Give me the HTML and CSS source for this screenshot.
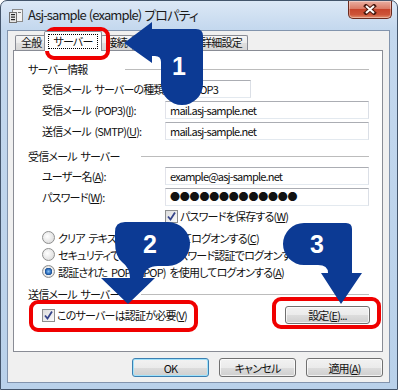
FILE: index.html
```html
<!DOCTYPE html>
<html lang="ja">
<head>
    <meta charset="UTF-8">
    <title>Asj-sample (example) プロパティ</title>
    <link rel="stylesheet" href="styles.css">
</head>
<body>
<div class="window">
    <div class="titlebar">
        <svg class="app-icon" width="15" height="14" viewBox="0 0 15 14">
            <rect x="3.5" y="0.5" width="10" height="12" fill="#f2f2f2" stroke="#8c8c8c"/>
            <rect x="0.5" y="3.5" width="7" height="10" fill="#e6e6e6" stroke="#707070"/>
            <rect x="2" y="5" width="4" height="1.2" fill="#222"/>
            <rect x="2" y="7.5" width="4" height="1.2" fill="#222"/>
            <rect x="2" y="10" width="4" height="1.2" fill="#222"/>
            <rect x="9" y="3" width="3" height="1" fill="#777"/>
        </svg>
        <span class="title">Asj-sample (example) プロパティ</span>
        <div class="close">
            <svg width="14" height="11" viewBox="0 0 14 11">
                <path d="M3 2 L11 9 M11 2 L3 9" stroke="#4b1a10" stroke-width="4" stroke-linecap="square"/>
                <path d="M3 2 L11 9 M11 2 L3 9" stroke="#fff" stroke-width="2"/>
            </svg>
        </div>
    </div>

    <div class="client">
        <div class="tabs">
            <div class="tab">全般</div>
            <div class="tab active"><span class="focus">サーバー</span></div>
            <div class="tab">接続</div>
            <div class="tab">セキュリティ</div>
            <div class="tab">詳細設定</div>
        </div>

        <div class="panel">
            <div class="group">
                <span class="group-label g1">サーバー情報</span><span class="rule"></span>
            </div>
            <div class="field">
                <span class="label wide">受信メール サーバーの種類(<u>M</u>):</span>
                <span class="box short">POP3</span>
            </div>
            <div class="field">
                <span class="label">受信メール (POP3)(<u>I</u>):</span>
                <span class="box">mail.asj-sample.net</span>
            </div>
            <div class="field">
                <span class="label">送信メール (SMTP)(<u>U</u>):</span>
                <span class="box">mail.asj-sample.net</span>
            </div>

            <div class="group second">
                <span class="group-label g2">受信メール サーバー</span><span class="rule"></span>
            </div>
            <div class="field">
                <span class="label">ユーザー名(<u>A</u>):</span>
                <span class="box">example@asj-sample.net</span>
            </div>
            <div class="field">
                <span class="label">パスワード(<u>W</u>):</span>
                <span class="box dots">●●●●●●●●●●●●●</span>
            </div>
            <div class="option save">
                <span class="check on"></span>パスワードを保存する(<u>W</u>)
            </div>
            <div class="option radio-row first">
                <span class="radio"></span>クリア テキスト認証を使用してログオンする(<u>C</u>)
            </div>
            <div class="option radio-row">
                <span class="radio"></span>セキュリティで保護されたパスワード認証でログオンする(<u>Q</u>)
            </div>
            <div class="option radio-row">
                <span class="radio on"></span>認証された POP (APOP) を使用してログオンする(<u>A</u>)
            </div>

            <div class="group third">
                <span class="group-label g2">送信メール サーバー</span><span class="rule"></span>
            </div>
            <div class="option last">
                <span class="check on"></span>このサーバーは認証が必要(<u>V</u>)
                <span class="btn settings">設定(<u>E</u>)...</span>
            </div>
        </div>

        <div class="buttons">
            <span class="btn default">OK</span>
            <span class="btn">キャンセル</span>
            <span class="btn">適用(<u>A</u>)</span>
        </div>
    </div>

    <!-- annotation overlay -->
    <svg class="marks" width="398" height="390" viewBox="0 0 398 390">
        <g fill="none" stroke="#f00000" stroke-width="4">
            <rect x="47" y="29" width="61" height="29" rx="7"/>
            <rect x="31" y="302" width="165" height="28" rx="7"/>
            <rect x="274" y="299" width="105" height="28" rx="7"/>
        </g>
        <g fill="#0c3a94">
            <path d="M124 43 L152 22 L152 29 L196 29 Q203 29 203 36 L203 84 A21 21 0 0 1 161 84 L161 62 Q161 56 155 56 L152 56 L152 63 Z"/>
            <path d="M125 222 L168 222 A22 22 0 0 1 168 266 L158 266 Q145 266 143 278 L155 278 L128 304 L101 278 L130 278 Q130 268 122 262 Q115 256 115 242 L115 232 Q115 222 125 222 Z"/>
            <path d="M346 223 Q352 223 352 229 L352 273 L362 273 L341 304 L321 273 L328 273 Q328 265 318 265 L304 265 A21 21 0 0 1 304 223 Z"/>
        </g>
        <g class="num" fill="#fff" text-anchor="middle">
            <text x="179" y="75">1</text>
            <text x="150" y="253">2</text>
            <text x="317" y="253">3</text>
        </g>
    </svg>
</div>
</body>
</html>
```

FILE: styles.css
```css
* { box-sizing: border-box; }
body {
    margin: 0;
    width: 398px;
    height: 390px;
    overflow: hidden;
    background: #fff;
    font-family: "Noto Sans CJK JP", "Noto Sans", sans-serif;
    font-size: 11px;
    letter-spacing: -0.8px;
    word-spacing: 2px;
    font-feature-settings: "palt";
    color: #111;
}
u { text-underline-offset: 1px; }

.window {
    position: relative;
    width: 398px;
    height: 390px;
    border: 1px solid #44556b;
    border-radius: 7px 7px 0 0;
    background: linear-gradient(#dce8f6, #c4d8ee 28px, #b9d1ea);
    padding: 0 7px 6px 6px;
    display: flex;
    flex-direction: column;
}

/* title bar */
.titlebar { height: 29px; display: flex; align-items: center; margin-right: -2px; }
.app-icon { margin: 0 4px 0 2px; }
.title { font-size: 13px; letter-spacing: -0.9px; word-spacing: 1px; color: #1b1b1b; margin-top: -2px; }
.close {
    margin-left: auto;
    align-self: flex-start;
    width: 44px;
    height: 18px;
    border: 1px solid #6b2a1e;
    border-top: none;
    border-radius: 0 0 5px 5px;
    background: linear-gradient(#eab0a2, #db7c67 45%, #c7452c 50%, #cd5439 80%, #e3916f);
    box-shadow: inset 0 0 0 1px rgba(255,255,255,0.35);
    display: flex;
    align-items: center;
    justify-content: center;
}

/* client area */
.client {
    flex: 1;
    background: #f0f0f0;
    border: 1px solid #8294ad;
    padding: 0 6px 0 5px;
    display: flex;
    flex-direction: column;
}
.tabs { display: flex; align-items: flex-end; height: 19px; padding-left: 2px; }
.tab {
    height: 15px;
    padding: 0 5px;
    margin-right: -1px;
    border: 1px solid #898c95;
    border-bottom: none;
    border-radius: 2px 2px 0 0;
    background: linear-gradient(#f5f5f5, #ececec 50%, #e0e0e0 50%, #d6d6d6);
    line-height: 13px;
    white-space: nowrap;
}
.tab.active {
    position: relative;
    z-index: 1;
    height: 20px;
    margin: 0 -1px -1px -2px;
    padding: 2px 3px 0;
    background: #fff;
}
.focus { display: inline-block; border: 1px dotted #000; padding: 0 4px; line-height: 13px; }

.panel {
    height: 302px;
    background: #fff;
    border: 1px solid #898c95;
    padding: 10px 13px 0 14px;
    display: flex;
    flex-direction: column;
}
.group { display: flex; align-items: center; height: 16px; }
.group.second { margin-top: 8px; }
.group.third { margin-top: 6px; }
.group-label { flex: none; white-space: nowrap; }
.g1 { width: 97px; }
.g2 { width: 113px; }
.rule { flex: 1; height: 1px; background: #bcbcbc; }

.field { display: flex; align-items: center; height: 18px; margin-top: 3px; padding-left: 14px; }
.label { flex: none; width: 123px; white-space: nowrap; }
.label.wide { width: 146px; }
.box {
    flex: 1;
    height: 18px;
    border: 1px solid;
    border-color: #abadb3 #dbdfe6 #e3e9ef #e2e3ea;
    padding: 0 4px;
    line-height: 16px;
    background: #fff;
    white-space: nowrap;
}
.box.short { flex: none; width: 63px; }
.box.dots { font-size: 10px; letter-spacing: -0.2px; }

.option { display: flex; align-items: center; white-space: nowrap; }
.save { height: 16px; margin-top: 2px; padding-left: 137px; }
.radio-row { height: 17px; padding-left: 14px; }
.radio-row.first { margin-top: 5px; }
.last { height: 18px; margin-top: 4px; padding-left: 14px; margin-right: -1px; }

.check {
    flex: none;
    width: 13px;
    height: 13px;
    margin-right: 2px;
    border: 1px solid #8e8f8f;
    background: linear-gradient(135deg, #dcdcdc, #fbfbfb);
}
.check.on {
    background:
        url("data:image/svg+xml,%3Csvg xmlns='http://www.w3.org/2000/svg' width='11' height='11'%3E%3Cpath d='M2 5.5 L4.5 8.5 L9 1.5' fill='none' stroke='%2335448a' stroke-width='1.8'/%3E%3C/svg%3E") center / 11px 11px no-repeat,
        linear-gradient(135deg, #dcdcdc, #fbfbfb);
}
.radio {
    flex: none;
    width: 13px;
    height: 13px;
    margin-right: 3px;
    border: 1px solid #8e8f8f;
    border-radius: 50%;
    background: radial-gradient(circle at 40% 40%, #fff, #d4d4d4);
}
.radio.on {
    background: radial-gradient(circle, #8cc3f2 0, #2c6cbc 2.5px, #1b4c8c 3.5px, #f2f2f2 4px, #d4d4d4 6px);
}

.btn {
    display: flex;
    align-items: center;
    justify-content: center;
    height: 18px;
    border: 1px solid #707070;
    border-radius: 3px;
    background: linear-gradient(#f2f2f2, #ebebeb 50%, #dddddd 50%, #cfcfcf);
    box-shadow: inset 0 0 0 1px rgba(255,255,255,0.7);
    line-height: 14px;
    white-space: nowrap;
}
.settings { width: 85px; margin-left: auto; }

.buttons { display: flex; justify-content: flex-end; gap: 10px; margin-top: 6px; }
.buttons .btn { width: 77px; height: 19px; }
.buttons .btn.default {
    border-color: #3c7fb1;
    box-shadow: inset 0 0 0 1px #9fe2fb;
}

/* annotations */
.marks { position: absolute; left: -1px; top: -1px; pointer-events: none; }
.num { font-family: "Liberation Sans", Arial, sans-serif; font-weight: bold; font-size: 25px; letter-spacing: 0; }
```
